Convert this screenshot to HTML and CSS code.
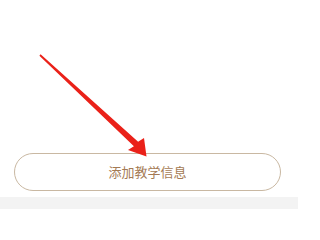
FILE: index.html
```html
<!DOCTYPE html>
<html lang="zh">
<head>
<meta charset="utf-8">
<link rel="stylesheet" href="styles.css">
</head>
<body>
<div class="page">
  <div class="content"></div>
  <div class="actions">
    <button class="add-btn">添加教学信息</button>
  </div>
  <div class="footer-band"></div>
  <svg class="arrow" width="298" height="209" viewBox="0 0 298 209">
    <polygon points="39.4,55.8 40.6,54.2 138.1,141.8 144,138 146.5,156.5 128,150 133.9,146.2" fill="#ea2119"/>
  </svg>
</div>
</body>
</html>
```
FILE: styles.css
```css
html, body {
  margin: 0;
  padding: 0;
  background: #ffffff;
}
.page {
  position: relative;
  width: 298px;
  height: 209px;
  overflow: hidden;
  display: flex;
  flex-direction: column;
  font-family: "Noto Sans CJK SC", "Noto Sans", sans-serif;
}
.content {
  height: 153px;
}
.actions {
  padding: 0 17px 0 14px;
  height: 44px;
}
.add-btn {
  display: block;
  width: 100%;
  height: 38px;
  box-sizing: border-box;
  border: 1px solid #c9b8a2;
  border-radius: 19px;
  background: #ffffff;
  color: #a47a54;
  font-family: "Noto Sans CJK SC", "Noto Sans", sans-serif;
  font-size: 13px;
  line-height: 36px;
  padding: 0;
  text-align: center;
}
.footer-band {
  flex: 1;
  background: #f3f3f3;
}
.arrow {
  position: absolute;
  left: 0;
  top: 0;
  pointer-events: none;
}
```
